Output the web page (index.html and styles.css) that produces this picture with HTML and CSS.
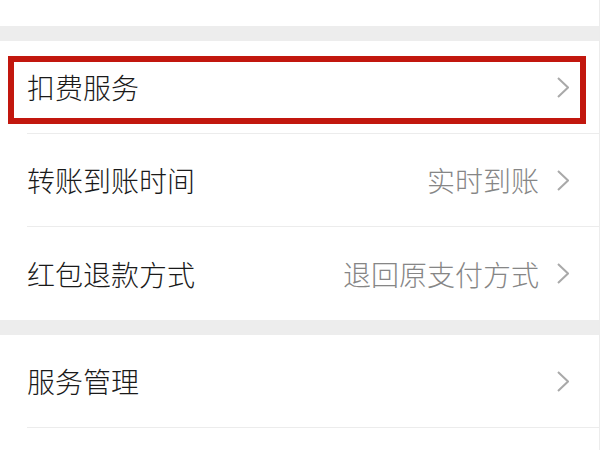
FILE: index.html
```html
<!DOCTYPE html>
<html lang="zh-CN">
<head>
    <meta charset="UTF-8">
    <meta name="viewport" content="width=device-width, initial-scale=1.0">
    <title>支付设置</title>
    <link rel="stylesheet" href="styles.css">
</head>
<body>

<div class="settings">
    <div class="group-tail"></div>
    <div class="gap"></div>

    <div class="group">
        <div class="row row-marked">
            <span class="label">扣费服务</span>
            <span class="value"></span>
            <svg class="arrow" viewBox="0 0 12 21"><polyline points="1,1 11,10.5 1,20"/></svg>
            <div class="mark"></div> <!-- czerwona ramka zaznaczenia -->
        </div>
        <div class="row">
            <span class="label">转账到账时间</span>
            <span class="value">实时到账</span>
            <svg class="arrow" viewBox="0 0 12 21"><polyline points="1,1 11,10.5 1,20"/></svg>
        </div>
        <div class="row">
            <span class="label">红包退款方式</span>
            <span class="value">退回原支付方式</span>
            <svg class="arrow" viewBox="0 0 12 21"><polyline points="1,1 11,10.5 1,20"/></svg>
        </div>
    </div>

    <div class="gap"></div>

    <div class="group">
        <div class="row">
            <span class="label">服务管理</span>
            <span class="value"></span>
            <svg class="arrow" viewBox="0 0 12 21"><polyline points="1,1 11,10.5 1,20"/></svg>
        </div>
        <div class="row"></div>
    </div>
</div>

</body>
</html>
```

FILE: styles.css
```css
body {
    margin: 0;
    padding: 0;
    background-color: #fff;
    font-family: "Noto Sans CJK SC", "Noto Sans", sans-serif;
    color: #1a1a1a;
    overflow: hidden;
}

.settings {
    width: 600px;
    height: 450px; /* tylko widoczny fragment listy */
    overflow: hidden;
    border-right: 1px solid #ececec; /* cienka krawędź po prawej */
    box-sizing: border-box;
}

.group-tail {
    height: 26px;
    background-color: #fff;
}

.gap {
    height: 15px;
    background-color: #ededed; /* szary pasek między grupami */
}

.group {
    padding-left: 27px;
    background-color: #fff;
}

.row {
    display: flex;
    align-items: center;
    height: 92px;
    padding-right: 30px;
    border-bottom: 1px solid #ececec;
    position: relative;
}

.group > .row:last-child {
    border-bottom: none;
    height: 93px;
}

.label {
    font-size: 28px;
    font-weight: 300;
    line-height: 1;
    flex: 1;
}

.value {
    font-size: 28px;
    font-weight: 300;
    line-height: 1;
    color: #868686;
    margin-right: 18px;
}

.arrow {
    width: 12px;
    height: 21px;
    fill: none;
    stroke: #a9a9a9;
    stroke-width: 2;
}

.mark {
    position: absolute;
    left: -19px;
    right: 13px;
    top: 15px;
    bottom: 9px;
    border: 6px solid #c2170e;
    box-sizing: border-box;
}
```
